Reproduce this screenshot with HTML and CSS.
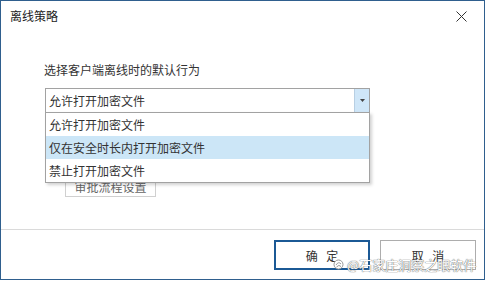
FILE: index.html
```html
<!DOCTYPE html>
<html lang="zh-CN">
<head>
    <meta charset="UTF-8">
    <title>离线策略</title>
    <link rel="stylesheet" href="styles.css">
</head>
<body>
    <div class="dialog">
        <div class="titlebar">
            <span class="title">离线策略</span>
            <svg class="close" width="11" height="11" viewBox="0 0 11 11">
                <path d="M0.5 0.5 L10.5 10.5 M10.5 0.5 L0.5 10.5" stroke="#333" stroke-width="1" fill="none"/>
            </svg>
        </div>

        <div class="content">
            <div class="label">选择客户端离线时的默认行为</div>
            <div class="combo">
                <span class="combo-text">允许打开加密文件</span>
                <span class="combo-btn">
                    <svg width="5" height="3" viewBox="0 0 5 3"><path d="M0 0 H5 L2.5 3 Z" fill="#444"/></svg>
                </span>
                <ul class="combo-list">
                    <li>允许打开加密文件</li>
                    <li class="selected">仅在安全时长内打开加密文件</li>
                    <li>禁止打开加密文件</li>
                </ul>
            </div>
            <button class="flow-btn">审批流程设置</button>
        </div>

        <div class="footer">
            <button class="btn btn-ok">确 定</button>
            <button class="btn">取 消</button>
        </div>

        <div class="watermark">
            <svg width="11" height="11" viewBox="0 0 11 11">
                <circle cx="5.5" cy="5.5" r="4.5" fill="#fff" stroke="#999" stroke-width="1"/>
                <path d="M3 6 Q5.5 2 8 5 M3.5 8 Q6 5 8 7.5" stroke="#999" stroke-width="1" fill="none"/>
            </svg>
            <span>@石家庄洞察之眼软件</span>
        </div>
    </div>
</body>
</html>
```

FILE: styles.css
```css
* {
    box-sizing: border-box;
}
body {
    margin: 0;
    background: #fff;
    font-family: "Noto Sans CJK SC", "Microsoft YaHei", sans-serif;
    font-size: 12px;
    color: #333;
}
.dialog {
    position: relative;
    width: 485px;
    height: 280px;
    border: 1px solid #2f5f8e;
    background: #fff;
    display: flex;
    flex-direction: column;
}
.titlebar {
    height: 30px;
    display: flex;
    align-items: center;
    justify-content: space-between;
    padding: 0 17px 0 9px;
}
.title {
    color: #222;
    line-height: 16px;
}
.close {
    display: block;
    margin-top: 1px;
}
.content {
    height: 198px;
    padding: 31px 0 0 43px;
}
.label {
    line-height: 16px;
}
.combo {
    position: relative;
    width: 325px;
    height: 25px;
    margin: 10px 0 0 1px;
    border: 1px solid #a2a2a2;
    display: flex;
    align-items: center;
}
.combo-text {
    flex: 1;
    padding-left: 3px;
    line-height: 16px;
}
.combo-btn {
    width: 15px;
    height: 100%;
    background: #cfe6f8;
    border-left: 1px solid #b8cfe3;
    display: flex;
    align-items: center;
    justify-content: center;
}
.combo-btn svg {
    display: block;
}
.combo-list {
    position: absolute;
    top: 23px;
    left: -1px;
    width: 325px;
    margin: 0;
    padding: 0;
    list-style: none;
    background: #fff;
    border: 1px solid #a2a2a2;
    box-shadow: 2px 2px 3px rgba(0, 0, 0, 0.18);
    z-index: 2;
}
.combo-list li {
    height: 23px;
    line-height: 23px;
    padding-left: 3px;
}
.combo-list li.selected {
    background: #cce6f7;
}
.flow-btn {
    display: block;
    margin: 62px 0 0 21px;
    width: 91px;
    height: 22px;
    border: 1px solid #d0d0d0;
    background: #fff;
    color: #666;
    font-family: inherit;
    font-size: 12px;
    padding: 0;
}
.footer {
    flex: 1;
    border-top: 1px solid #dadada;
    display: flex;
    justify-content: flex-end;
    gap: 10px;
    padding: 10px 8px 0 0;
}
.btn {
    width: 96px;
    height: 30px;
    border: 1px solid #adadad;
    background: #fff;
    color: #333;
    font-family: inherit;
    font-size: 12px;
    letter-spacing: 3px;
    padding: 0 0 0 3px;
}
.btn-ok {
    border: 2px solid #1b5995;
}
.watermark {
    position: absolute;
    left: 332px;
    top: 254px;
    display: flex;
    align-items: center;
    gap: 3px;
    font-size: 13px;
    color: #fff;
    text-shadow: 0 0 1px #666, 0 0 1px #666;
    z-index: 3;
}
.watermark svg {
    display: block;
}
```
